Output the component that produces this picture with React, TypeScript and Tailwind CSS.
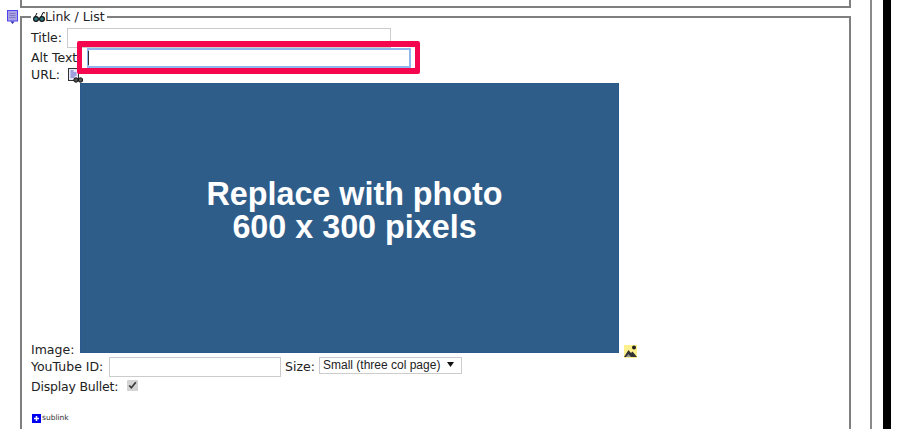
const labelFont = "font-['DejaVu_Sans',sans-serif] text-[12.5px] text-[#222] leading-[16px]";

function NoteIcon() {
  return (
    <svg width="11" height="14" viewBox="0 0 11 14" className="shrink-0">
      <rect x="0.5" y="0.5" width="10" height="10.500" fill="#a9a3e6" stroke="#4f44ee" />
      <path d="M2.500 3.500h6M2.500 5.500h6M2.500 7.500h6" stroke="#8079c4" />
      <path d="M3.500 11.500h4l-2 2.500z" fill="#2a22b0" />
    </svg>
  );
}

function GlassesIcon() {
  return (
    <svg width="12" height="12" viewBox="0 0 12 12" className="shrink-0">
      <circle cx="3" cy="8" r="2.400" fill="#2f7f8a" stroke="#111" strokeWidth="1.200" />
      <circle cx="9" cy="8" r="2.400" fill="#2f7f8a" stroke="#111" strokeWidth="1.200" />
      <path d="M2 6 4 2M8 6l2-4.500 2 .5" fill="none" stroke="#111" />
    </svg>
  );
}

function UrlIcon() {
  return (
    <svg width="15" height="15" viewBox="0 0 15 15">
      <rect x="0.5" y="0.500" width="10" height="12" fill="#e6e6f4" stroke="#333" />
      <path d="M2.500 3h3M2.500 5h6M2.500 7h6M2.500 9h4" stroke="#5a58c8" />
      <circle cx="8" cy="12" r="2.200" fill="#555" stroke="#111" />
      <circle cx="12.500" cy="12" r="2.200" fill="#555" stroke="#111" />
    </svg>
  );
}

function PictureIcon() {
  return (
    <svg width="13" height="13" viewBox="0 0 13 13">
      <rect width="13" height="13" fill="#fbf08c" />
      <circle cx="10" cy="2.500" r="2" fill="#222" />
      <path d="M0 12 4.500 5 7 8l1.500-1.500L13 12z" fill="#333" />
      <path d="M2 12l2.500-3L7 12z" fill="#999" />
    </svg>
  );
}

function PlusIcon() {
  return (
    <svg width="9" height="9" viewBox="0 0 9 9" className="shrink-0">
      <rect width="9" height="9" fill="#0000f0" />
      <path d="M4.500 2v5M2 4.500h5" stroke="#fff" strokeWidth="1.500" />
    </svg>
  );
}

export default function App() {
  return (
    <div className="relative flex h-[429px] w-[900px] overflow-hidden bg-white">
      {/* left gutter with the note icon */}
      <div className="w-[20px] shrink-0 pl-[7px] pt-[10px]">
        <NoteIcon />
      </div>

      {/* form column */}
      <div className="flex w-[831px] shrink-0 flex-col">
        <div className="h-[8px] w-full shrink-0 border-x-2 border-b-2 border-[#7f7f7f]" />

        <fieldset className="mt-[1px] h-[500px] shrink-0 border-2 border-[#7f7f7f] pl-[9px] pt-[3px]">
          <legend className={`flex items-center pl-[2px] pr-[2px] ${labelFont}`}>
            <GlassesIcon />
            Link / List
          </legend>

          <div className={`flex h-[20px] items-center ${labelFont}`}>
            <span className="w-[36px]">Title:</span>
            <input className="h-[20px] w-[324px] border border-[#ccc] bg-white" readOnly />
          </div>

          <div className={`relative flex h-[20px] items-center ${labelFont}`}>
            <span className="w-[56px]">Alt Text</span>
            <input className="h-[20px] w-[324px] border-2 border-[#8fb6ee] bg-white" readOnly />
            {/* text caret */}
            <span className="absolute left-[57px] top-[3px] h-[14px] w-[1px] bg-[#333]" />
          </div>

          <div className={`flex h-[14px] items-center ${labelFont}`}>
            <span className="w-[37px]">URL:</span>
            <UrlIcon />
          </div>

          <div className={`flex h-[271px] items-end ${labelFont}`}>
            <span className="mb-[-4px] w-[49px] leading-[15px]">Image:</span>
            <div className="flex h-[270px] w-[539px] flex-col items-center justify-center border border-[#2a5a8c] bg-[#2f5d8a] pb-[15px] pl-[10px] font-['Liberation_Sans',sans-serif] text-[32.3px] font-bold leading-[33px] text-white">
              <span>Replace with photo</span>
              <span>600 x 300 pixels</span>
            </div>
            <span className="mb-[-5px] ml-[5px]">
              <PictureIcon />
            </span>
          </div>

          <div className={`mt-[4px] flex h-[20px] items-center ${labelFont}`}>
            <span className="w-[78px]">YouTube ID:</span>
            <input className="h-[20px] w-[172px] border border-[#ccc] bg-white" readOnly />
            <span className="ml-[4px] w-[34px]">Size:</span>
            <div className="relative mb-[3px]">
              <select className="block h-[17px] w-[143px] appearance-none border border-[#ccc] bg-white pl-[3px] font-['Liberation_Sans',sans-serif] text-[12px] leading-[15px] text-[#222]">
                <option>Small (three col page)</option>
              </select>
              <svg width="7" height="5" viewBox="0 0 7 5" className="absolute right-[8px] top-[5px]">
                <path d="M0 0h7L3.500 5z" fill="#111" />
              </svg>
            </div>
          </div>

          <div className={`mt-[2px] flex h-[16px] items-center ${labelFont}`}>
            <span className="w-[96px] tracking-[-0.2px]">Display Bullet:</span>
            <input type="checkbox" defaultChecked className="mb-[4px] h-[11px] w-[11px] accent-[#d4d4d4]" />
          </div>

          <div className="ml-[1px] mt-[18px] flex items-center gap-[1px] font-['DejaVu_Sans',sans-serif] text-[7.500px] leading-[10px] text-[#333]">
            <PlusIcon />
            sublink
          </div>
        </fieldset>
      </div>

      {/* right rails */}
      <div className="ml-[19px] h-full w-[2px] shrink-0 bg-[#8a8a8a]" />
      <div className="ml-[11px] h-full w-[8px] shrink-0 bg-black" />

      {/* red callout over the alt text input */}
      <div className="absolute left-[77px] top-[41px] h-[33px] w-[343px] rounded-[2px] border-x-[5px] border-y-[6px] border-[#f5074f]" />
    </div>
  );
}
